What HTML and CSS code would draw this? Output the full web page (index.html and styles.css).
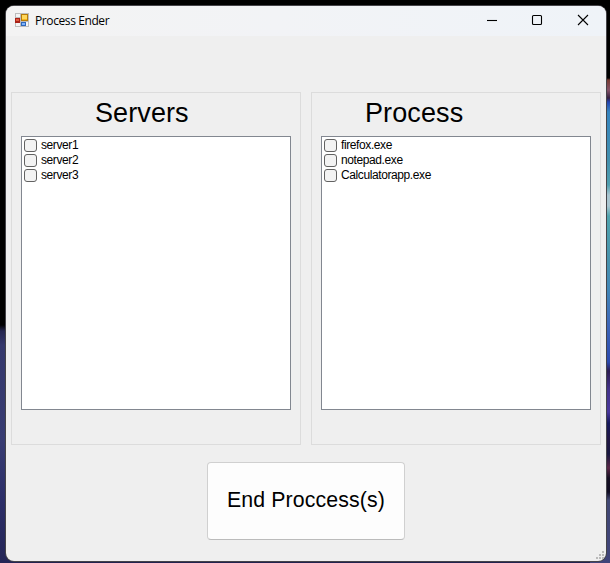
FILE: index.html
```html
<!DOCTYPE html>
<html lang="en">
<head>
<meta charset="utf-8">
<title>Process Ender</title>
<link rel="stylesheet" href="styles.css">
</head>
<body>
<div class="backdrop-left"></div>
<div class="backdrop-right"></div>
<main class="window">
  <header class="titlebar">
    <svg class="app-icon" width="14" height="14" viewBox="0 0 14 14">
      <path fill="#bcbcbc" d="M0 0h14v14H0z"/>
      <path fill="#f4f4f4" d="M1 1h4v3H1zM1 10h4v3H1zM11 9h2v4h-2z"/>
      <path fill="#a92218" d="M0 5h5v5H0z"/><path fill="#e05b40" d="M1 6h3v2H1z"/>
      <path fill="#b77c09" d="M6 1h7v7H6z"/><path fill="#ffd75a" d="M7 2h5v4H7z"/><path fill="#f5b51c" d="M7 6h5v1H7z"/>
      <path fill="#2e67bb" d="M6 9h5v4H6z"/><path fill="#7eb3fa" d="M7 10h3v2H7z"/>
    </svg>
    <span class="title">Process Ender</span>
    <div class="controls">
      <svg width="12" height="12" viewBox="0 0 12 12"><path d="M1 6.5h10"/></svg>
      <svg width="12" height="12" viewBox="0 0 12 12"><rect x="1.5" y="1.5" width="9" height="9" rx="1"/></svg>
      <svg class="close" width="12" height="12" viewBox="0 0 12 12"><path d="M1 1l10 10M11 1L1 11"/></svg>
    </div>
  </header>
  <div class="groups">
    <section class="group">
      <h1 class="heading servers">Servers</h1>
      <div class="list">
        <label class="item"><span class="check"></span><span>server1</span></label>
        <label class="item"><span class="check"></span><span>server2</span></label>
        <label class="item"><span class="check"></span><span>server3</span></label>
      </div>
    </section>
    <section class="group">
      <h1 class="heading process">Process</h1>
      <div class="list">
        <label class="item"><span class="check"></span><span>firefox.exe</span></label>
        <label class="item"><span class="check"></span><span>notepad.exe</span></label>
        <label class="item"><span class="check"></span><span>Calculatorapp.exe</span></label>
      </div>
    </section>
  </div>
  <button class="end">End Proccess(s)</button>
  <svg class="grip" width="8" height="8" viewBox="0 0 8 8"><path fill="#bababa" d="M6 0h2v2H6zM3 3h2v2H3zM6 3h2v2H6zM0 6h2v2H0zM3 6h2v2H3zM6 6h2v2H6z"/></svg>
</main>
</body>
</html>
```
FILE: styles.css
```css
* { box-sizing: border-box; }
body {
  margin: 0;
  width: 610px;
  height: 563px;
  padding: 6px 4px 2px 6px;
  overflow: hidden;
  position: relative;
  background: linear-gradient(#000 0 540px, #22224f 550px);
  font-family: "Liberation Sans", Arial, sans-serif;
  color: #000;
}
.backdrop-left, .backdrop-right { position: absolute; top: 0; bottom: 0; }
.backdrop-left {
  left: 0;
  width: 20px;
  background: linear-gradient(#000 325px, #25264f 331px, #35386c 345px, #383c72 440px, #2c2e68 500px, #242556 563px);
}
.backdrop-right {
  right: 0;
  width: 20px;
  background: linear-gradient(#000 78px, #783b32 80px, #855267 90px, #352040 98px, #2444b0 102px, #3685c0 112px, #438fad 160px, #519faf 185px, #a9c4cf 195px, #a9c4cf 206px, #51a4ae 216px, #4992ac 260px, #4286b7 290px, #3e66b8 325px, #2c4aae 362px, #2d1c51 371px, #44338b 390px, #49379c 412px, #16195b 423px, #211642 440px, #17173f 454px, #592646 468px, #150f22 478px, #100c22 492px, #424873 500px, #40447a 563px);
}
.window {
  position: relative;
  display: flex;
  flex-direction: column;
  width: 600px;
  height: 555px;
  border-radius: 8px;
  background: #efefef;
  box-shadow: 0 0 0 1px #454449;
}
.titlebar {
  display: flex;
  align-items: center;
  height: 30px;
  padding: 0 17px 2px 9px;
  border-radius: 8px 8px 0 0;
  background: linear-gradient(90deg, #f3f3f3, #f2f3f6 45%, #eff3f8);
}
.app-icon { margin-right: 6px; }
.title { font: 12px/16px "Open Sans", sans-serif; letter-spacing: -.4px; padding-top: 1px; }
.controls { display: flex; gap: 33px; margin-left: auto; }
.controls svg { display: block; fill: none; stroke: #000; stroke-width: 1.1; }
.controls .close { margin-left: 1px; }
.groups { display: flex; gap: 10px; padding: 56px 5px 0; }
.group {
  width: 290px;
  height: 353px;
  padding: 0 9px;
  border: 1px solid #dcdcdc;
}
.heading { margin: 0; height: 43px; font-size: 27px; line-height: 40px; font-weight: 400; letter-spacing: .1px; }
.servers { padding-left: 74px; }
.process { padding-left: 44px; }
.list { height: 274px; padding: 1px 2px; border: 1px solid #828790; background: #fff; }
.item { display: flex; align-items: center; height: 15px; gap: 4px; font-size: 12px; line-height: 15px; letter-spacing: -.4px; }
.check { width: 13px; height: 13px; border: 1px solid #626262; border-radius: 3px; background: #f3f3f3; }
.end {
  width: 198px;
  height: 78px;
  margin: 17px 0 0 201px;
  padding: 0 0 2px;
  border: 1px solid #d0d0d0;
  border-bottom-color: #bbb;
  border-radius: 4px;
  background: #fdfdfd;
  color: #000;
  font: 21.3px "Liberation Sans", Arial, sans-serif;
  letter-spacing: .12px;
}
.grip { position: absolute; right: 2px; bottom: 2px; }
```
